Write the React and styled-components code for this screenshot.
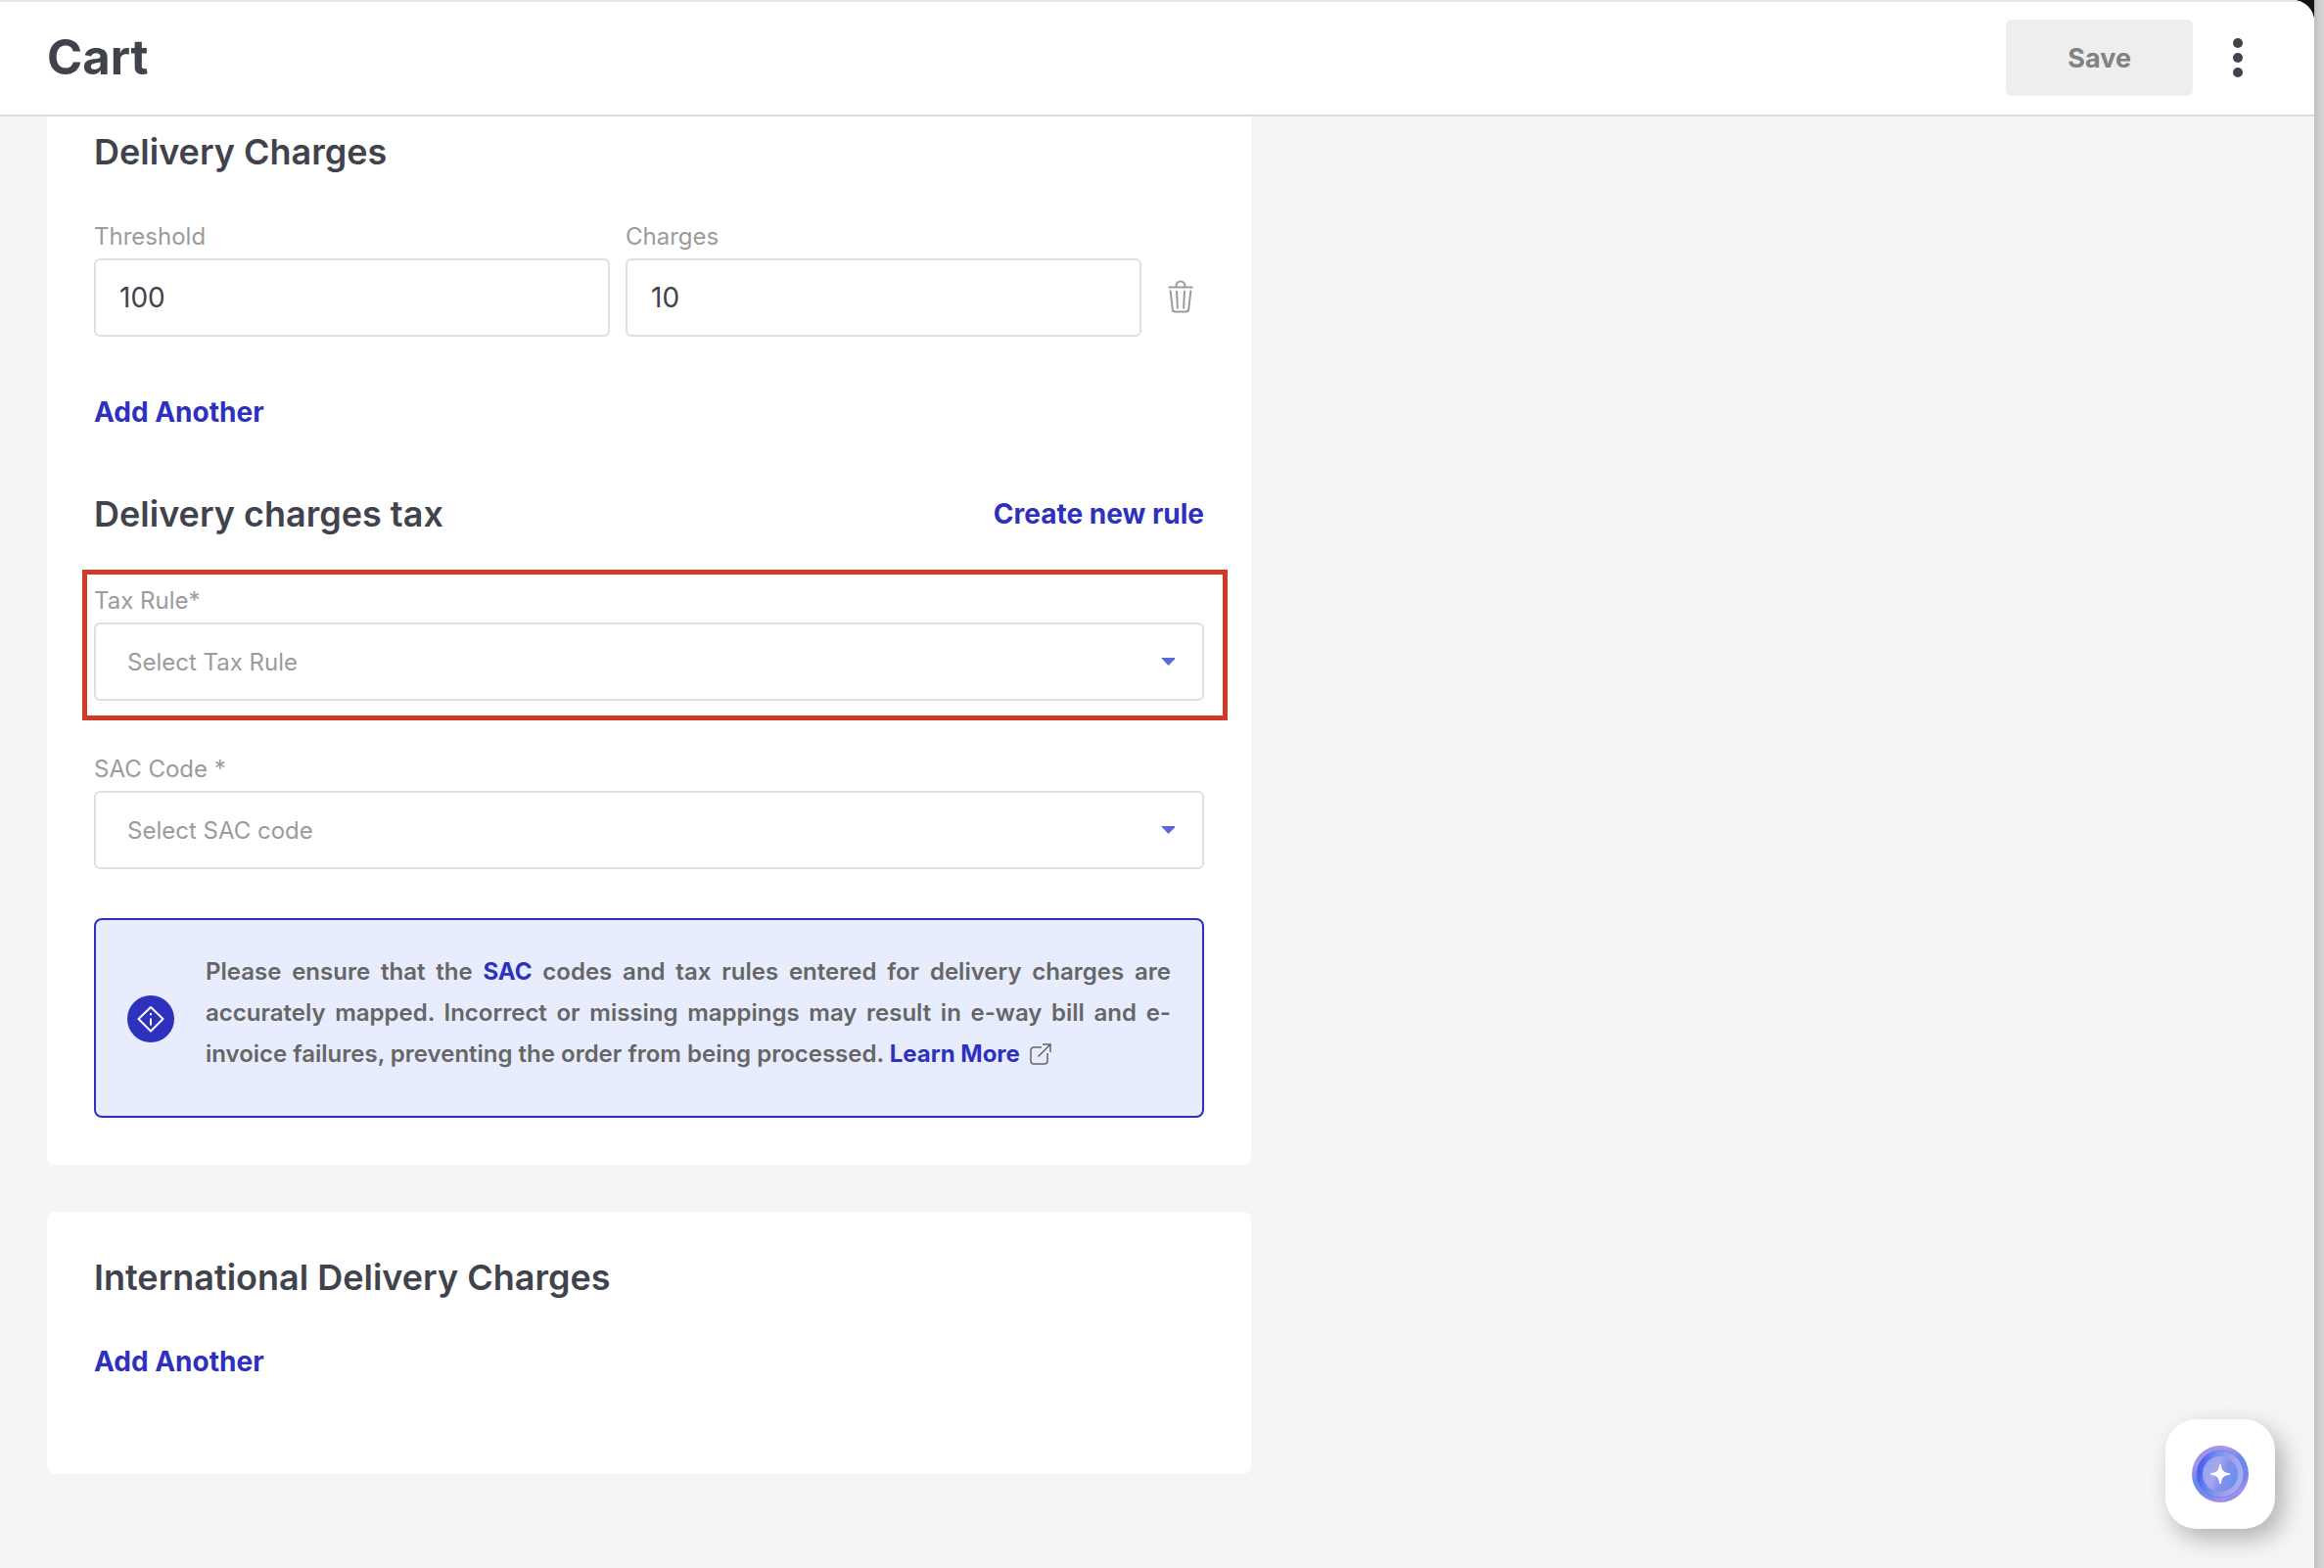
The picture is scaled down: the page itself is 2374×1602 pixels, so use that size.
import React, { useState } from "react";
import styled, { createGlobalStyle } from "styled-components";


const TrashIcon = () => (
  <svg width="26" height="34" viewBox="0 0 26 34" fill="none" stroke="#9b9b9b" strokeWidth="2">
    <path d="M0.5 7.5h25" />
    <path d="M8.5 7V6a4.5 4.5 0 0 1 9 0v1" />
    <path d="M2.5 10.5l2.3 19.6a2.6 2.6 0 0 0 2.6 2.4h11.2a2.6 2.6 0 0 0 2.6-2.4L23.5 10.5" />
    <path d="M9 11l.9 18.5M17 11l-.9 18.5" />
  </svg>
);

const DotsIcon = () => (
  <svg width="10" height="40" viewBox="0 0 10 40" fill="#41434c">
    <circle cx="5" cy="5" r="5" />
    <circle cx="5" cy="20" r="5" />
    <circle cx="5" cy="35" r="5" />
  </svg>
);

const CaretIcon = () => (
  <svg width="14" height="8" viewBox="0 0 14 8" fill="#5c68d9">
    <path d="M0 0h14v1.5L7.5 8z" />
  </svg>
);

const InfoIcon = () => (
  <svg width="48" height="48" viewBox="0 0 48 48" fill="none">
    <circle cx="24" cy="24" r="24" fill="#2e31be" />
    <path d="M24 12L36.5 24L24 36.5L11.5 24z" stroke="#fff" strokeWidth="2" strokeLinejoin="round" />
    <path d="M24 23.5v7M24 18v2.2" stroke="#fff" strokeWidth="2" />
  </svg>
);

const ExternalIcon = () => (
  <svg width="22" height="22" viewBox="0 0 22 22" fill="none" stroke="#666" strokeWidth="1.5">
    <path d="M12 4H4a3 3 0 0 0-3 3v11a3 3 0 0 0 3 3h11a3 3 0 0 0 3-3v-8" />
    <path d="M13 1h8v8M21 1L8.5 13.5" />
  </svg>
);

const AssistantIcon = () => (
  <svg width="60" height="60" viewBox="0 0 60 60">
    <defs>
      <linearGradient id="outer" x1="0.2" y1="0" x2="0.7" y2="1">
        <stop offset="0" stopColor="#8f8fec" />
        <stop offset="0.2" stopColor="#a595ea" />
        <stop offset="0.45" stopColor="#5f8bef" />
        <stop offset="0.75" stopColor="#7c88e8" />
        <stop offset="0.9" stopColor="#a58fec" />
        <stop offset="1" stopColor="#6d8aea" />
      </linearGradient>
      <linearGradient id="ring" x1="0" y1="0.4" x2="1" y2="0.6">
        <stop offset="0" stopColor="#4756ea" />
        <stop offset="0.35" stopColor="#6f93ee" />
        <stop offset="0.7" stopColor="#a99df0" />
        <stop offset="1" stopColor="#9fb2f2" />
      </linearGradient>
      <linearGradient id="core" x1="0" y1="0.3" x2="1" y2="0.7">
        <stop offset="0" stopColor="#8fa6f2" />
        <stop offset="0.35" stopColor="#aaa6ee" />
        <stop offset="0.6" stopColor="#8290ea" />
        <stop offset="1" stopColor="#6691ee" />
      </linearGradient>
    </defs>
    <circle cx="30" cy="30" r="29" fill="url(#outer)" />
    <circle cx="30" cy="30" r="24" fill="url(#ring)" stroke="#6674dc" strokeWidth="0.6" />
    <circle cx="30" cy="30" r="18" fill="url(#core)" />
    <path d="M30 20C31.5 27 33 28.5 40 30C33 31.5 31.5 33 30 40C28.5 33 27 31.5 20 30C27 28.5 28.5 27 30 20z" fill="#fff" stroke="#fff" strokeLinejoin="round" />
  </svg>
);

const Select = ({ id, label, placeholder }) => {
  return (
    <Field>
      <Label htmlFor={id}>{label}</Label>
      <SelectBox>
        <StyledSelect id={id} defaultValue="">
          <option value="">{placeholder}</option>
        </StyledSelect>
        <CaretIcon />
      </SelectBox>
    </Field>
  );
};

const App = () => {
  const [threshold, setThreshold] = useState("100");
  const [charges, setCharges] = useState("10");

  return (
    <Shell>
      <GlobalStyle />
      <Page>
        <Header>
          <Title>Cart</Title>
          <Actions>
            <SaveButton type="button" disabled>Save</SaveButton>
            <IconButton type="button" aria-label="More options">
              <DotsIcon />
            </IconButton>
          </Actions>
        </Header>
        <Content>
          <Card $attached>
            <Heading>Delivery Charges</Heading>
            <ChargeRow>
              <Field>
                <Label htmlFor="threshold">Threshold</Label>
                <Input id="threshold" value={threshold} onChange={(e) => setThreshold(e.target.value)} />
              </Field>
              <Field>
                <Label htmlFor="charges">Charges</Label>
                <Input id="charges" value={charges} onChange={(e) => setCharges(e.target.value)} />
              </Field>
              <DeleteButton type="button" aria-label="Delete charge">
                <TrashIcon />
              </DeleteButton>
            </ChargeRow>
            <LinkButton type="button">Add Another</LinkButton>
            <HeadingRow>
              <Heading>Delivery charges tax</Heading>
              <LinkButton type="button">Create new rule</LinkButton>
            </HeadingRow>
            <Highlight>
              <Select id="tax-rule" label="Tax Rule*" placeholder="Select Tax Rule" />
            </Highlight>
            <Select id="sac-code" label="SAC Code *" placeholder="Select SAC code" />
            <Notice>
              <InfoIcon />
              <NoticeText>
                Please ensure that the <a href="#sac">SAC</a> codes and tax rules entered for
                delivery charges are accurately mapped. Incorrect or missing mappings may result
                in e-way bill and e-invoice failures, preventing the order from being
                processed. <a href="#learn-more">Learn More</a>
                <ExternalIcon />
              </NoticeText>
            </Notice>
          </Card>
          <Card>
            <Heading>International Delivery Charges</Heading>
            <CardActions>
              <LinkButton type="button">Add Another</LinkButton>
            </CardActions>
          </Card>
        </Content>
      </Page>
      <Assistant type="button" aria-label="Open assistant">
        <AssistantIcon />
      </Assistant>
    </Shell>
  );
};

const GlobalStyle = createGlobalStyle`
  * {
    box-sizing: border-box;
  }

  body {
    margin: 0;
    font-family: Inter, "Liberation Sans", sans-serif;
    color: #41434c;
  }

  button, input, select {
    font-family: inherit;
  }

  svg {
    flex-shrink: 0;
  }
`;

const Shell = styled.div`
  min-height: 100vh;
  padding-right: 10px;
  background: linear-gradient(to left, #d2d2d2, #d2d2d2 4px, #bdbdbd 10px, #141414 10px);
`;

const Page = styled.div`
  min-height: 100vh;
  background: #f5f5f5;
  border-top-right-radius: 22px;
  overflow: hidden;
`;

const Header = styled.header`
  display: flex;
  align-items: center;
  justify-content: space-between;
  padding: 18px 70px 19px 48px;
  background: #fff;
  border-top: 2px solid #e4e4e4;
  border-bottom: 2px solid #dcdcdc;
`;

const Title = styled.h1`
  margin: 0;
  font-size: 49px;
  font-weight: 700;
  line-height: 56px;
`;

const Actions = styled.div`
  display: flex;
  align-items: center;
  gap: 38px;
`;

const SaveButton = styled.button`
  height: 78px;
  padding: 0 63px;
  border: none;
  border-radius: 6px;
  background: #eee;
  color: #828282;
  font-size: 27px;
  font-weight: 700;
`;

const IconButton = styled.button`
  display: flex;
  padding: 3px;
  border: none;
  background: none;
  cursor: pointer;
`;

const Content = styled.main`
  display: flex;
  flex-direction: column;
  gap: 48px;
  padding: 0 48px 96px;
`;

const Card = styled.section`
  display: flex;
  flex-direction: column;
  width: 100%;
  max-width: 1230px;
  padding: ${(props) => (props.$attached ? "12px 48px 48px" : "43px 48px 91px")};
  background: #fff;
  border-radius: ${(props) => (props.$attached ? "0 0 8px 8px" : "8px")};
`;

const CardActions = styled.div`
  display: flex;
  margin-top: 38px;
`;

const Heading = styled.h2`
  margin: 0;
  font-size: 36px;
  font-weight: 600;
  line-height: 48px;
`;

const HeadingRow = styled.div`
  display: flex;
  align-items: center;
  justify-content: space-between;
  margin: 56px 0 33px;
`;

const ChargeRow = styled.div`
  display: flex;
  align-items: flex-end;
  gap: 16px;
  margin: 47px 0 53px;
`;

const Field = styled.div`
  display: flex;
  flex: 1;
  flex-direction: column;
  gap: 6px;
`;

const Label = styled.label`
  color: #9b9b9b;
  font-size: 24px;
  line-height: 32px;
`;

const Input = styled.input`
  width: 100%;
  height: 80px;
  padding: 0 24px;
  border: 2px solid #e0e0e0;
  border-radius: 6px;
  color: #41434c;
  font-size: 28px;
`;

const DeleteButton = styled.button`
  display: flex;
  align-items: center;
  justify-content: center;
  width: 48px;
  height: 80px;
  padding: 0 0 2px;
  border: none;
  background: none;
  cursor: pointer;
`;

const LinkButton = styled.button`
  align-self: flex-start;
  padding: 0;
  border: none;
  background: none;
  color: #2e31be;
  font-size: 28px;
  font-weight: 700;
  line-height: 48px;
  cursor: pointer;
`;

const Highlight = styled.div`
  display: flex;
  margin: 0 -24px 34px -12px;
  padding: 11px 19px 15px 7px;
  border: 5px solid #d13a24;
`;

const SelectBox = styled.div`
  display: flex;
  align-items: center;
  height: 80px;
  padding: 0 28px 0 32px;
  border: 2px solid #e0e0e0;
  border-radius: 6px;
`;

const StyledSelect = styled.select`
  flex: 1;
  height: 100%;
  padding: 0;
  border: none;
  outline: none;
  appearance: none;
  background: none;
  color: #9b9b9b;
  font-size: 24px;
`;

const Notice = styled.aside`
  display: flex;
  align-items: center;
  gap: 32px;
  margin-top: 50px;
  padding: 32px 32px 30px;
  border: 2px solid #2e31be;
  border-radius: 8px;
  background: #e8edfe;
`;

const NoticeText = styled.p`
  margin: 0;
  padding-bottom: 12px;
  color: #666;
  font-size: 24px;
  font-weight: 600;
  line-height: 42px;
  text-align: justify;

  a {
    color: #2e31be;
    font-weight: 700;
    text-decoration: none;
  }

  svg {
    margin-left: 10px;
    vertical-align: -3px;
  }
`;

const Assistant = styled.button`
  position: fixed;
  right: 50px;
  bottom: 40px;
  display: flex;
  align-items: center;
  justify-content: center;
  width: 112px;
  height: 112px;
  padding: 0;
  border: none;
  border-radius: 32px;
  background: #fff;
  box-shadow: 8px 10px 24px rgba(0, 0, 0, 0.28);
  cursor: pointer;
`;


export default App;
